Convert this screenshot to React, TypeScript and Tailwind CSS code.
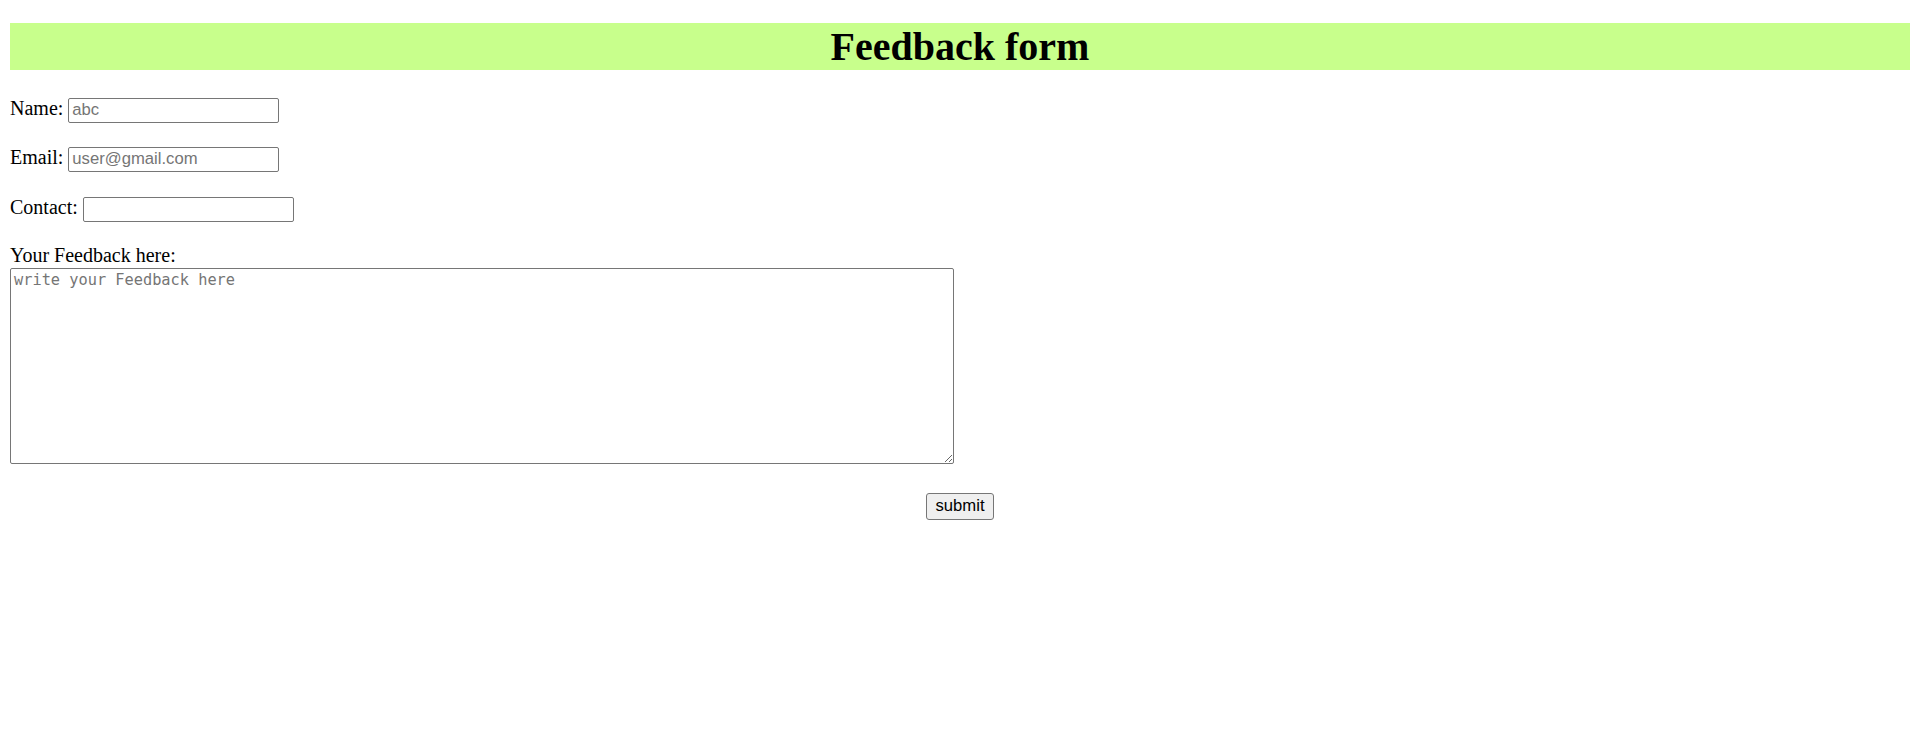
export default function App() {
  return (
    <div className="min-h-[748px] bg-white px-[10px] pt-[23px] text-[20px] text-black [font-family:'Liberation_Serif',serif]">
      <h1 className="h-[47px] bg-[#c8ff8c] text-center text-[40px] font-bold leading-[47px]">
        Feedback form
      </h1>

      <form
        className="flex flex-col items-start"
        onSubmit={(e) => e.preventDefault()}
      >
        <div className="mt-[27px] flex h-[25px] items-baseline">
          <label htmlFor="name" className="mr-[5px] leading-[23px]">
            Name:
          </label>
          <input
            id="name"
            type="text"
            placeholder="abc"
            className="h-[25px] w-[211px] rounded-[2px] border border-[#767676] px-[3px] text-[16.67px] placeholder:text-[#757575] [font-family:'Liberation_Sans',Arial,sans-serif]"
          />
        </div>

        <div className="mt-[24px] flex h-[25px] items-baseline">
          <label htmlFor="email" className="mr-[5px] leading-[23px]">
            Email:
          </label>
          <input
            id="email"
            type="email"
            placeholder="user@gmail.com"
            className="h-[25px] w-[211px] rounded-[2px] border border-[#767676] px-[3px] text-[16.67px] placeholder:text-[#757575] [font-family:'Liberation_Sans',Arial,sans-serif]"
          />
        </div>

        <div className="mt-[25px] flex h-[25px] items-baseline">
          <label htmlFor="contact" className="mr-[5px] leading-[23px]">
            Contact:
          </label>
          <input
            id="contact"
            type="text"
            className="h-[25px] w-[211px] rounded-[2px] border border-[#767676] px-[3px] text-[16.67px] [font-family:'Liberation_Sans',Arial,sans-serif]"
          />
        </div>

        <label htmlFor="feedback" className="mt-[23px] leading-[23px]">
          Your Feedback here:
        </label>
        <textarea
          id="feedback"
          placeholder="write your Feedback here"
          className="mt-[1px] h-[196px] w-[944px] rounded-[2px] border border-[#767676] px-[3px] py-[2px] text-[15.3px] leading-[19px] placeholder:text-[#757575] [font-family:'DejaVu_Sans_Mono',monospace]"
        />

        <div className="mt-[29px] flex w-full justify-center">
          <button
            type="submit"
            className="h-[27px] w-[68px] rounded-[3px] border border-[#767676] bg-[#efefef] text-[16.67px] leading-none [font-family:'Liberation_Sans',Arial,sans-serif]"
          >
            submit
          </button>
        </div>
      </form>
    </div>
  );
}
